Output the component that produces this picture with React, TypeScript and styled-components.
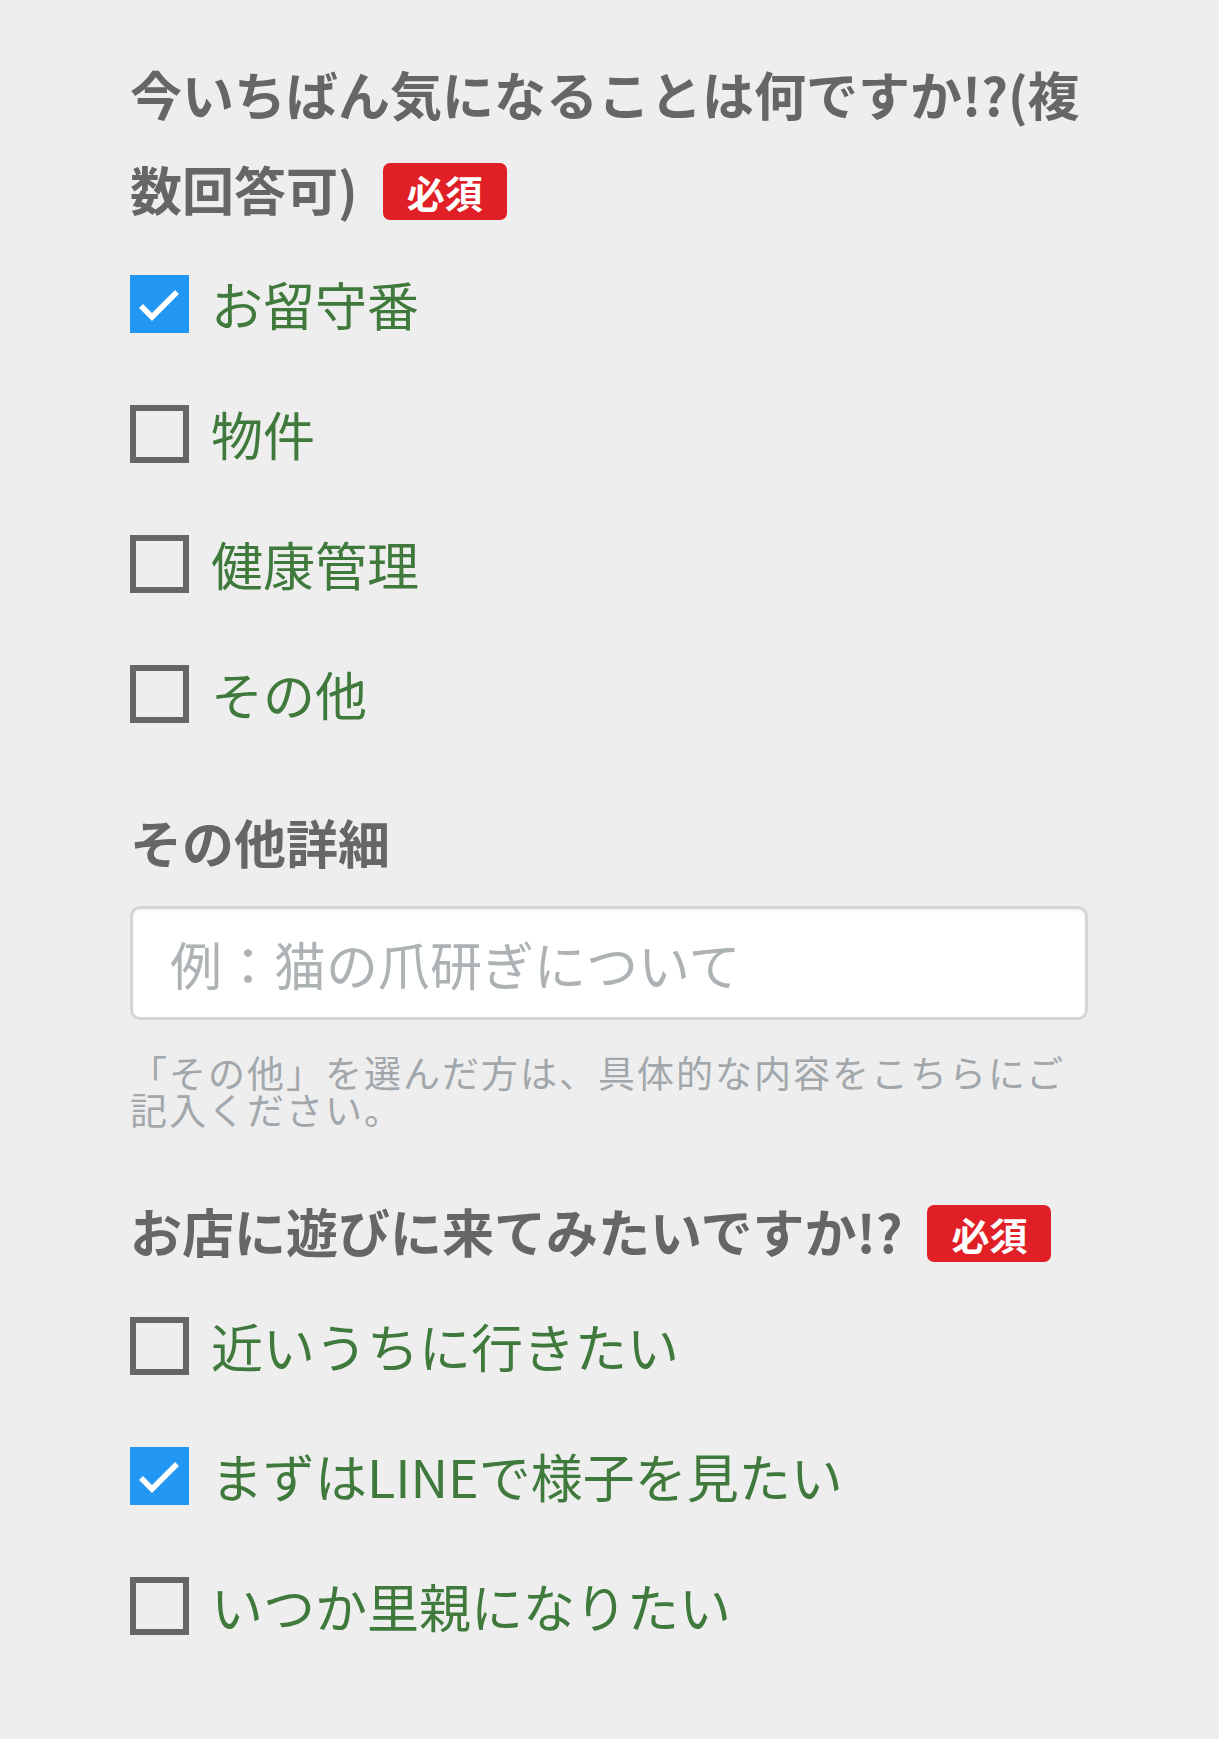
import React, { useState } from 'react';
import styled, { createGlobalStyle } from 'styled-components';

const GlobalStyle = createGlobalStyle`
  html, body {
    margin: 0;
    padding: 0;
    background: #eeeeee;
  }
  body {
    font-family: "Noto Sans CJK JP", "Noto Sans", sans-serif;
  }
`;

const Form = styled.form`
  width: 958px;
  margin: 0 0 0 130px;
  padding: 46px 0 70px;
  display: flex;
  flex-direction: column;
`;

const Question = styled.h2<{ $gap?: number }>`
  margin: ${({ $gap }) => $gap ?? 0}px 0 0;
  font-size: 52px;
  line-height: 95px;
  font-weight: 700;
  color: #666666;
`;

const Required = styled.span`
  display: inline-block;
  height: 57px;
  line-height: 57px;
  padding: 0 24px;
  margin-left: 25px;
  border-radius: 7px;
  background: #e11f26;
  color: #ffffff;
  font-size: 38px;
  font-weight: 700;
  vertical-align: middle;
  position: relative;
  top: -5px;
`;

const Options = styled.div`
  margin-top: 3px;
  display: flex;
  flex-direction: column;
`;

const Option = styled.label`
  height: 130px;
  display: flex;
  align-items: center;
  gap: 22px;
  cursor: pointer;
`;

const Box = styled.span<{ $checked: boolean }>`
  flex: none;
  width: 59px;
  height: 58px;
  box-sizing: border-box;
  display: flex;
  align-items: center;
  justify-content: center;
  background: ${({ $checked }) => ($checked ? '#2196f3' : 'transparent')};
  border: ${({ $checked }) => ($checked ? 'none' : '6px solid #666666')};
`;

const OptionText = styled.span`
  font-size: 52px;
  line-height: 1;
  font-weight: 400;
  color: #3f7a3c;
`;

const TextInput = styled.input`
  margin-top: 17px;
  box-sizing: border-box;
  width: 100%;
  height: 114px;
  padding: 0 35px 0 37px;
  border: 3px solid #d3d6d8;
  border-radius: 10px;
  background: #ffffff;
  box-shadow: inset 0 2px 3px rgba(0, 0, 0, 0.06);
  font-family: inherit;
  font-size: 52px;
  color: #333333;
  outline: none;

  &::placeholder {
    color: #adb2b5;
  }
`;

const Help = styled.p`
  margin: 34px 0 0;
  font-size: 37px;
  letter-spacing: 2px;
  line-height: 37px;
  color: #a2a7ab;
`;

const Check = () => (
  <svg width="59" height="58" viewBox="0 0 59 58">
    <polyline
      points="11,31 22,42 47,17"
      fill="none"
      stroke="#ffffff"
      strokeWidth="5.5"
    />
  </svg>
);

const CheckItem = ({ text, initial }: { text: string; initial?: boolean }) => {
  const [checked, setChecked] = useState(!!initial);
  return (
    <Option onClick={() => setChecked(!checked)}>
      <Box $checked={checked}>{checked && <Check />}</Box>
      <OptionText>{text}</OptionText>
    </Option>
  );
};

const App = () => {
  return (
    <>
      <GlobalStyle />
      <Form lang="ja" onSubmit={(e) => e.preventDefault()}>
        <Question>
          今いちばん気になることは何ですか!?(複数回答可)
          <Required>必須</Required>
        </Question>
        <Options>
          <CheckItem text="お留守番" initial />
          <CheckItem text="物件" />
          <CheckItem text="健康管理" />
          <CheckItem text="その他" />
        </Options>

        <Question $gap={35}>その他詳細</Question>
        <TextInput type="text" placeholder="例：猫の爪研ぎについて" />
        <Help>「その他」を選んだ方は、具体的な内容をこちらにご記入ください。</Help>

        <Question $gap={55}>
          お店に遊びに来てみたいですか!?
          <Required>必須</Required>
        </Question>
        <Options>
          <CheckItem text="近いうちに行きたい" />
          <CheckItem text="まずはLINEで様子を見たい" initial />
          <CheckItem text="いつか里親になりたい" />
        </Options>
      </Form>
    </>
  );
};

export default App;
